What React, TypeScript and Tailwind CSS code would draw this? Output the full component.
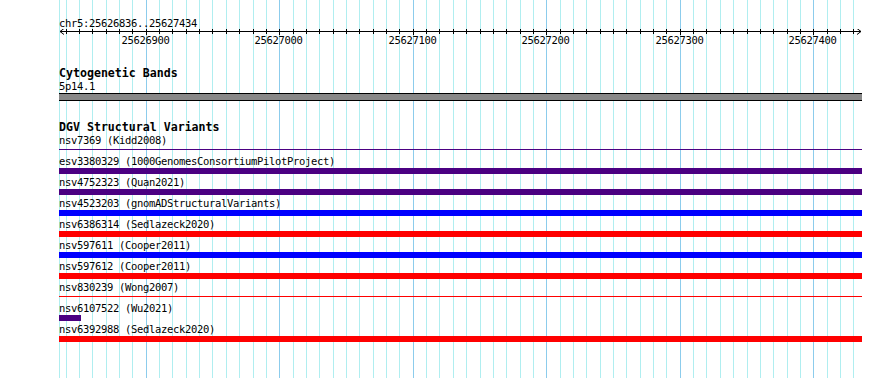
import React from 'react';

// bp -> pixel helpers for the 10bp guide lines
const X0 = 145.7;
const STEP = 13.352;
const ticks = Array.from({ length: 60 }, (_, i) => i - 6);
const tx = (k: number) => Math.round(X0 + STEP * k) + 0.5;

type Variant = {
  label: string;
  color: string;
  kind: 'thin' | 'bar' | 'short';
};

const variants: Variant[] = [
  { label: 'nsv7369 (Kidd2008)', color: 'bg-[#4b0082]', kind: 'thin' },
  { label: 'esv3380329 (1000GenomesConsortiumPilotProject)', color: 'bg-[#4b0082]', kind: 'bar' },
  { label: 'nsv4752323 (Quan2021)', color: 'bg-[#4b0082]', kind: 'bar' },
  { label: 'nsv4523203 (gnomADStructuralVariants)', color: 'bg-[#0000ff]', kind: 'bar' },
  { label: 'nsv6386314 (Sedlazeck2020)', color: 'bg-[#ff0000]', kind: 'bar' },
  { label: 'nsv597611 (Cooper2011)', color: 'bg-[#0000ff]', kind: 'bar' },
  { label: 'nsv597612 (Cooper2011)', color: 'bg-[#ff0000]', kind: 'bar' },
  { label: 'nsv830239 (Wong2007)', color: 'bg-[#ff0000]', kind: 'thin' },
  { label: 'nsv6107522 (Wu2021)', color: 'bg-[#4b0082]', kind: 'short' },
  { label: 'nsv6392988 (Sedlazeck2020)', color: 'bg-[#ff0000]', kind: 'bar' },
];

const Guides: React.FC = () => (
  <svg className="absolute inset-0" width={890} height={378} shapeRendering="crispEdges">
    <line x1={59.5} y1={0} x2={59.5} y2={378} stroke="#b0eef0" />
    {ticks.map((k) => (
      <line
        key={k}
        x1={tx(k)}
        y1={0}
        x2={tx(k)}
        y2={378}
        stroke={k % 10 === 0 ? '#8cccec' : '#b0eef0'}
      />
    ))}
  </svg>
);

const Ruler: React.FC = () => (
  <svg width={890} height={17} className="block" shapeRendering="crispEdges">
    <line x1={60} y1={2.5} x2={861} y2={2.5} stroke="#000" />
    <path d="M64 -0.5 L60 2.5 L64 5.5" fill="none" stroke="#000" shapeRendering="auto" />
    <path d="M857 -0.5 L861 2.5 L857 5.5" fill="none" stroke="#000" shapeRendering="auto" />
    {ticks.map((k) => (
      <line
        key={k}
        x1={tx(k)}
        y1={k % 10 === 0 ? -1 : 0}
        x2={tx(k)}
        y2={k % 10 === 0 ? 6 : 5}
        stroke="#000"
      />
    ))}
    {[0, 10, 20, 30, 40, 50].map((k) => (
      <text
        key={k}
        x={tx(k) - 1}
        y={15}
        textAnchor="middle"
        fontFamily="'DejaVu Sans Mono', monospace"
        fontSize={10.5}
        letterSpacing={-0.32}
        fill="#000"
      >
        {25626900 + k * 10}
      </text>
    ))}
  </svg>
);

const VariantRow: React.FC<{ v: Variant }> = ({ v }) => (
  <div className="h-[21px]">
    <div className="h-[13px] leading-[13px] pl-[59px] whitespace-nowrap">{v.label}</div>
    <div className="h-[6px]">
      {v.kind === 'thin' && <div className={`mt-[2px] h-px ml-[59px] w-[803px] ${v.color}`} />}
      {v.kind === 'bar' && <div className={`h-[6px] ml-[59px] w-[803px] ${v.color}`} />}
      {v.kind === 'short' && <div className={`h-[6px] ml-[59px] w-[22px] ${v.color}`} />}
    </div>
  </div>
);

export default function App() {
  return (
    <div className="relative w-[890px] h-[378px] overflow-hidden bg-white text-black font-['DejaVu_Sans_Mono',monospace] text-[10.5px] tracking-[-0.32px]">
      <Guides />
      <div className="relative">
        <div className="pt-[17px] h-[29px] leading-[12px] pl-[59px]">chr5:25626836..25627434</div>
        <Ruler />

        <div className="mt-[20px] h-[14px] leading-[14px] pl-[59px] font-bold text-[11.6px] tracking-normal">Cytogenetic Bands</div>
        <div className="h-[12px] leading-[12px] pl-[59px]">5p14.1</div>
        <div className="mt-px ml-[59px] w-[803px] h-[8px] bg-[#888888] border-y border-black" />

        <div className="mt-[20px] h-[13px] leading-[13px] pl-[59px] font-bold text-[11.6px] tracking-normal">DGV Structural Variants</div>
        {variants.map((v) => (
          <VariantRow key={v.label} v={v} />
        ))}
      </div>
    </div>
  );
}
